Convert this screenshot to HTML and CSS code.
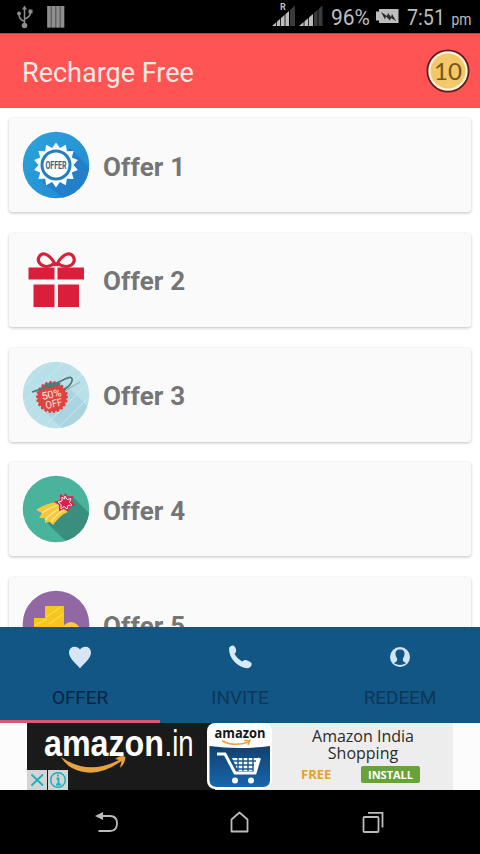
FILE: index.html
```html
<!DOCTYPE html>
<html lang="en">
<head>
<meta charset="utf-8">
<title>Recharge Free</title>
<link rel="stylesheet" href="styles.css">
</head>
<body>
<div class="screen">
  <header class="status">
    <svg class="status-left" width="60" height="33" viewBox="0 0 60 33">
      <g fill="none" stroke="#8d8d8d" stroke-width="1.5"><path d="M14.500 9V25M14.500 21.500Q8.500 19 9 13.500M14.500 19Q20.500 17 20.500 12"/></g>
      <g fill="#8d8d8d"><circle cx="14.500" cy="25.500" r="2.800"/><path d="M12 9.500L14.500 5.500 17 9.500ZM18.500 9.500h4v4h-4Z"/><circle cx="9" cy="13.500" r="2"/>
      <path d="M37 6h17.500v21.500H37Z" fill="#626262"/><path d="M37.500 6h3v21.500h-3zM42 6h3v21.500h-3zM46.500 6h3v21.500h-3zM51 6h3v21.500h-3z" fill="#8f8f8f"/></g>
    </svg>
    <svg class="status-right" width="210" height="33" viewBox="0 0 210 33">
      <g fill="#bdbdbd">
        <path d="M2 26L19 11V26Z"/><path d="M20 10l5-4.500V26h-5Z" fill="#3b3b3b"/>
        <path d="M29 26L43 14V26Z"/><path d="M44 13l8.500-7.500V26H44Z" fill="#3b3b3b"/>
      </g>
      <path d="M6.500 18v8M10.500 15v11M15 12v14M19.500 8v18M34 18v8M38.500 15v11M43.500 11v15M48 8v18" stroke="#000" stroke-width=".8"/>
      <text x="10" y="9.500" class="roaming">R</text>
      <text x="61" y="25" class="status-text" textLength="39" lengthAdjust="spacingAndGlyphs">96%</text>
      <path d="M109 9h19.500v14H109v-2.500h-3v-9h3Z" fill="#bdbdbd"/><path d="M111 12l6 4 1-3 3 4 1-3 4 7-5-3-1 2.500-4-4-1 3Z" fill="#292929"/>
      <text x="137" y="25" class="status-text" textLength="38" lengthAdjust="spacingAndGlyphs">7:51</text>
      <text x="181.500" y="25" class="meridiem" textLength="20" lengthAdjust="spacingAndGlyphs">pm</text>
    </svg>
  </header>

  <div class="appbar">
    <h1>Recharge Free</h1>
    <svg class="coin" width="44" height="44" viewBox="0 0 44 44">
      <circle cx="22" cy="22" r="20.600" fill="#fff3d7" stroke="#5c1d20" stroke-width="1.800"/>
      <circle cx="22" cy="22" r="17.500" fill="#f3c86b"/>
      <text class="coin-value" x="8" y="30.500" textLength="28" lengthAdjust="spacingAndGlyphs">10</text>
    </svg>
  </div>

  <main class="offers">
    <article class="card">
      <svg class="icon" viewBox="-34 -34 68 68">
        <defs><linearGradient id="blue" x1="0" y1="0" x2="1" y2="1"><stop offset="0" stop-color="#2ca4dc"/><stop offset="1" stop-color="#2388d0"/></linearGradient>
        <clipPath id="disc"><circle r="33.300"/></clipPath></defs>
        <circle r="33.300" fill="url(#blue)"/>
        <path d="M14-17L40 9V40H17L-14 17Z" fill="#237fc9" clip-path="url(#disc)"/>
        <polygon fill="#f8fcff" points="0,-22.500 3.900,-17.100 9.800,-20.300 10.900,-13.700 17.600,-14 15.800,-7.600 21.900,-5 17.500,0 21.900,5 15.800,7.600 17.600,14 10.900,13.700 9.800,20.300 3.900,17.100 0,22.500 -3.900,17.100 -9.800,20.300 -10.900,13.700 -17.600,14 -15.800,7.600 -21.900,5 -17.500,0 -21.900,-5 -15.800,-7.600 -17.600,-14 -10.900,-13.700 -9.800,-20.300 -3.900,-17.100"/>
        <circle r="14" fill="#fff" stroke="#267fb9" stroke-width="3"/>
        <text class="seal" x="-10.500" y="4" textLength="21" lengthAdjust="spacingAndGlyphs">OFFER</text>
      </svg>
      <h2>Offer 1</h2>
    </article>
    <article class="card">
      <svg class="icon" viewBox="-34 -34 68 68">
        <g fill="#d91f3a"><path d="M-27.500-12.500H-1.500V-.500H-27.500ZM1.500-12.500H28V-.500H1.500ZM-22.500 4.500H-1.500V27H-22.500ZM2 4.500H23V27H2Z"/></g>
        <path d="M-.5-14C-4-24-12-28.500-16-24.500C-20.500-19-15-13.500-9-13.500Q-4-14-.5-18M.5-14C4-24 12-28.500 16.500-24.500C21-19 16-13.500 10-13.500Q4-14 .5-18" fill="none" stroke="#d91f3a" stroke-width="3.200"/>
      </svg>
      <h2>Offer 2</h2>
    </article>
    <article class="card">
      <svg class="icon" viewBox="-34 -34 68 68">
        <circle r="33.300" fill="#b9dfe9"/>
        <g clip-path="url(#disc)"><path d="M10-10L36 16V36H9L-14 14Z" fill="#a9d4e0"/>
        <path d="M-40-15L-15-40M-40 0L0-40M-40 15L15-40M-40 30L30-40M-30 35L40-35M-15 35L40-20M0 35L40-5M15 35L40 10" stroke="#cbe7ee" stroke-width="1"/></g>
        <circle cx="-4" cy="2" r="14.500" fill="#df433f"/><circle cx="-4" cy="2" r="14.700" fill="none" stroke="#df433f" stroke-width="2.800" stroke-linecap="round" stroke-dasharray=".1 4.100"/>
        <path d="M-24-3C-9-8-2-10 9-16Q17-20 16-14Q14-8 8-6M-13-9Q-4-13 3-11Q-3-8-13-7" fill="none" stroke="#54777a" stroke-width="1.700"/>
        <path d="M9-4L24-13" stroke="#91a9ae"/>
        <g transform="rotate(-12 -4 2)" class="discount"><text x="-14" y="3" textLength="20" lengthAdjust="spacingAndGlyphs">50%</text><text x="-12" y="12.500" textLength="17" lengthAdjust="spacingAndGlyphs">OFF</text></g>
      </svg>
      <h2>Offer 3</h2>
    </article>
    <article class="card">
      <svg class="icon" viewBox="-34 -34 68 68">
        <circle r="33.300" fill="#49b39b"/>
        <path d="M17-12L40 11V40H18L-10 13Z" fill="#398e7d" clip-path="url(#disc)"/>
        <path d="M0-7L12 3C6 5 2 10-3 16L-6 13-11 14-11 9-17 9-14 4-20 1C-14-3-9-5 0-7Z" fill="#f5c83c"/>
        <path d="M2-4Q-9 0-14 4M5-1Q-5 4-11 11M8 1Q1 5-5 13" fill="none" stroke="#fbe69a" stroke-width="1.300"/>
        <polygon points="9,-16 12,-12.500 17.500,-13 15.500,-8 19,-4 14,-2.500 12,2.500 8,0 3,2 3,-4 -2,-7 4,-9 4,-15 8,-12.500" fill="#d5214e"/>
        <polygon points="9,-13 11,-9.500 15,-10.500 13.500,-6.500 16,-4 12,-3.500 11,0 8,-2.500 5,0 5,-4.500 2,-7 6,-8 6,-12 8.500,-10" fill="#d5214e" stroke="#ffeaf0" stroke-width="1"/>
      </svg>
      <h2>Offer 4</h2>
    </article>
    <article class="card">
      <svg class="icon" viewBox="-34 -34 68 68">
        <circle r="33.300" fill="#9168a3"/>
        <path d="M-11-18H8V-5H-11ZM-22-6H8V20H-22Z" fill="#f7c61e"/><circle cx="15" cy="7" r="9" fill="#f5cd45"/>
        <path d="M-10-7L5-17M-21 1L-9-5M-7 0L7-10" stroke="#fad94c" stroke-width="1.500"/>
      </svg>
      <h2>Offer 5</h2>
    </article>
  </main>

  <nav class="tabs">
    <div class="tab active">
      <svg width="26" height="26" viewBox="0 0 26 26"><path d="M13 24.500C10 20 2 15 2 8.500C2 2 10 1 13 5.500C16 1 24 2 24 8.500C24 15 16 20 13 24.500Z" fill="#d6e6f4"/></svg>
      <span>OFFER</span>
    </div>
    <div class="tab">
      <svg width="26" height="26" viewBox="0 0 26 26"><path d="M2 5C2 3 4 1.500 6 1.500C8.500 2 9.500 6 9 8L7.500 10Q10 14.500 15 17.500L17.500 16C20 16 24.500 18 24.800 20C24.500 22.800 22 24.300 20 24.300C10 23 2 14 2 5Z" fill="#d6eafa"/></svg>
      <span>INVITE</span>
    </div>
    <div class="tab">
      <svg width="26" height="26" viewBox="0 0 26 26"><circle cx="13" cy="13" r="10" fill="#cfe5f7"/><path d="M13 5.500C16.500 5.500 17.800 7.500 17.500 10.500C17.300 13 15.800 13.500 15.800 15.500C15.800 18 18 18 19 19.300Q13 22.500 7 19.300C8 18 10.200 18 10.200 15.500C10.200 13.500 8.700 13 8.500 10.500C8.200 7.500 9.500 5.500 13 5.500Z" fill="#125685"/></svg>
      <span>REDEEM</span>
    </div>
  </nav>

  <section class="ad">
    <div class="brand">
      <svg width="180" height="67" viewBox="0 0 180 67">
        <text class="amazon" x="17" y="32.500" textLength="120" lengthAdjust="spacingAndGlyphs">amazon</text>
        <text class="dot-in" x="137.500" y="32.500" textLength="29" lengthAdjust="spacingAndGlyphs">.in</text>
        <path d="M34 34Q61 53 92 37L88 36Q94 31 98.500 34Q98 41 93 45L94.500 38Q68 57 45 45Q39 42 34 34Z" fill="#e9a33c"/>
        <path d="M0 47h20v20H0ZM21 47h20v20H21Z" fill="#d4d4d4"/><path d="M4.500 51.500l11.500 11M16 51.500l-11.500 11" stroke="#1eafb9" stroke-width="1.800"/>
        <circle cx="31" cy="57" r="7.300" fill="none" stroke="#1eafb9" stroke-width="1.500"/><path d="M29.500 55.500H31.500V61.500M29 61.500h5M31 51.500v2" fill="none" stroke="#1eafb9" stroke-width="1.800"/>
      </svg>
    </div>
    <svg class="store" width="66" height="67" viewBox="0 0 66 67">
      <defs><linearGradient id="shop" x1="0" y1="0" x2="0" y2="1"><stop offset="0" stop-color="#12406e"/><stop offset="1" stop-color="#1667ad"/></linearGradient></defs>
      <rect width="65" height="66" rx="8" fill="#fff"/>
      <path d="M2.500 23Q32 27 63 23V57Q63 64 56 64H10Q2.500 64 2.500 57Z" fill="url(#shop)"/>
      <text class="store-name" x="7.500" y="15" textLength="51" lengthAdjust="spacingAndGlyphs">amazon</text>
      <path d="M15 18Q27 24 42 19M37 17.500H43L41 22" fill="none" stroke="#e9a33c" stroke-width="1.500"/>
      <path d="M10 31H18L28 50H48L52.500 35" fill="none" stroke="#fff" stroke-width="3"/>
      <path d="M25 35h27l-4 13H31Z" fill="#fff"/><path d="M25 38h24M27 42h20M29 46h17M31 35v13M36 35v13M41 35v13M46 35v13" stroke="#1b5790" stroke-width="1.400"/>
      <circle cx="28" cy="57.500" r="3" fill="#fff"/><circle cx="44" cy="57.500" r="3" fill="#fff"/>
    </svg>
    <div class="promo">
      <p>Amazon India<br>Shopping</p>
      <div class="actions"><span class="free">FREE</span><span class="install">INSTALL</span></div>
    </div>
  </section>

  <footer class="system">
    <svg width="480" height="64" viewBox="0 0 480 64" fill="none" stroke="#bcbcbc" stroke-width="1.800">
      <path d="M99 26H110Q117 26 117 33.500T110 41H98.500"/><path d="M95 26L103 22V30Z" fill="#bcbcbc" stroke="none"/>
      <path d="M231.500 41.500V29.500L239.500 22.500 247.500 29.500V41.500Z" stroke-linejoin="round"/>
      <rect x="363.500" y="27" width="15" height="15" rx="1"/><path d="M368 22.800H382.500V37.500"/>
    </svg>
  </footer>
</div>
</body>
</html>
```
FILE: styles.css
```css
* { box-sizing: border-box; }
body { margin: 0; background: #fff; font-family: Roboto, "Liberation Sans", sans-serif; }
h1, h2, p { margin: 0; }
svg { display: block; flex: none; }
.screen { width: 480px; height: 854px; display: flex; flex-direction: column; overflow: hidden; }
.status { height: 33px; flex: none; display: flex; justify-content: space-between; background: #000; }
.status-left { margin-left: 10px; }
.status-text { font-size: 22px; fill: #bdbdbd; }
.meridiem { font-size: 17px; fill: #bdbdbd; }
.roaming { font-size: 9px; font-weight: 700; fill: #bdbdbd; }
.appbar { height: 75px; flex: none; display: flex; align-items: center; justify-content: space-between; padding: 0 10px 0 22px; background: #ff5453; border-top: 1px solid #c44444; }
.appbar h1 { font-size: 27px; line-height: 32px; font-weight: 400; color: #ffe9e3; padding-top: 3px; }
.coin { margin-top: -1px; }
.coin-value { font: 400 23px Lato, sans-serif; fill: #775515; }
.offers { height: 519px; flex: none; display: flex; flex-direction: column; gap: 20.8px; padding: 10px 9px 0; overflow: hidden; }
.card { height: 94px; flex: none; display: flex; align-items: center; gap: 13px; padding: 0 13px; background: #fafafa; border-radius: 3px; box-shadow: 0 1px 3px rgba(0, 0, 0, .25); }
.icon { width: 68px; height: 68px; }
.card h2 { font-size: 26px; line-height: 32px; font-weight: 700; color: #757575; letter-spacing: .15px; padding-top: 3px; }
.seal { font: 700 10px Roboto, sans-serif; fill: #28658b; }
.discount { font: 400 10.5px Roboto, sans-serif; fill: #ffe9e3; }
.tabs { height: 96px; flex: none; display: grid; grid-template-columns: repeat(3, 1fr); background: #125685; border-top: 1px solid #25516b; }
.tab { display: flex; flex-direction: column; align-items: center; padding-top: 16px; font-size: 19px; letter-spacing: -.1px; color: #0b3759; border-bottom: 3px solid transparent; }
.tab span { margin-top: 16px; line-height: 24px; }
.tab.active { color: #062443; border-color: #d55c70; }
.ad { height: 67px; flex: none; display: flex; padding: 0 27px; background: #fcfcfc; }
.brand { width: 180px; background: #1a1a1a; }
.amazon { font: 700 37px "Liberation Sans", Arial, sans-serif; fill: #fff; }
.dot-in { font: 400 37px "Liberation Sans", Arial, sans-serif; fill: #fff; }
.store { background: linear-gradient(90deg, #1a1a1a 12%, #ededed 12%); }
.store-name { font: 700 14px "Open Sans", sans-serif; fill: #161616; }
.promo { flex: 1; background: #ededed; padding: 5px 0 0; font-family: "Open Sans", sans-serif; }
.promo p { font-size: 16px; line-height: 17px; text-align: center; color: #2b2b2b; }
.actions { display: flex; align-items: center; justify-content: space-between; padding: 4px 33px 0 28px; }
.free { font-size: 13px; line-height: 17px; font-weight: 700; color: #e4a12f; }
.install { width: 59px; height: 17px; border-radius: 2px; background: #67a33a; color: #fff; font: 700 11px/17px "Open Sans", sans-serif; text-align: center; }
.system { height: 64px; flex: none; background: #000; }
```
